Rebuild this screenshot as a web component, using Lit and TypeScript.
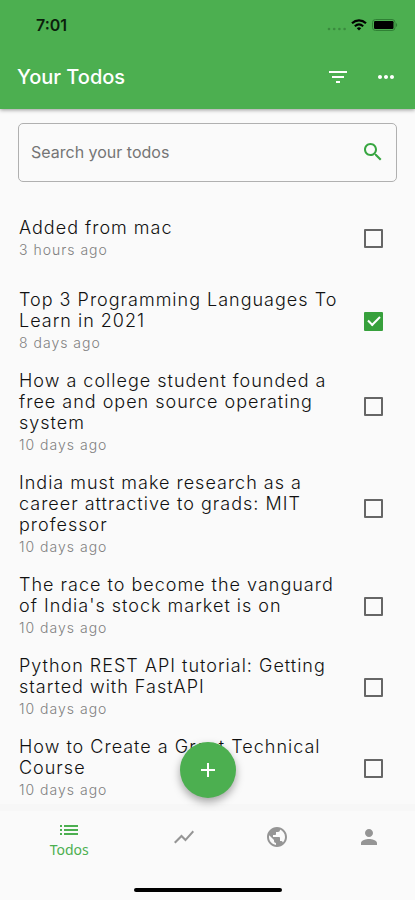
import { LitElement, html, css, svg } from "lit";
import { customElement, property, state } from "lit/decorators.js";

interface Todo {
  title: string;
  age: string;
  done: boolean;
}

const icon = (path: string) => html`
  <svg viewBox="0 0 24 24" aria-hidden="true">${svg`<path d=${path} />`}</svg>
`;

const ICONS = {
  filter: "M10 18h4v-2h-4v2zM3 6v2h18V6H3zm3 7h12v-2H6v2z",
  more: "M6 10c-1.1 0-2 .9-2 2s.9 2 2 2 2-.9 2-2-.9-2-2-2zm12 0c-1.1 0-2 .9-2 2s.9 2 2 2 2-.9 2-2-.9-2-2-2zm-6 0c-1.1 0-2 .9-2 2s.9 2 2 2 2-.9 2-2-.9-2-2-2z",
  search:
    "M15.5 14h-.79l-.28-.27C15.41 12.59 16 11.11 16 9.5 16 5.91 13.09 3 9.5 3S3 5.91 3 9.5 5.91 16 9.5 16c1.61 0 3.09-.59 4.23-1.57l.27.28v.79l5 4.99L20.49 19l-4.99-5zm-6 0C7.01 14 5 11.99 5 9.5S7.01 5 9.5 5 14 7.01 14 9.5 11.99 14 9.5 14z",
  add: "M19 13h-6v6h-2v-6H5v-2h6V5h2v6h6v2z",
  list: "M3 13h2v-2H3v2zm0 4h2v-2H3v2zm0-8h2V7H3v2zm4 4h14v-2H7v2zm0 4h14v-2H7v2zM7 7v2h14V7H7z",
  chart: "M3.5 18.49l6-6.01 4 4L22 6.92l-1.41-1.41-7.09 7.97-4-4L2 16.99z",
  globe:
    "M12 2C6.48 2 2 6.48 2 12s4.48 10 10 10 10-4.48 10-10S17.52 2 12 2zm-1 17.93c-3.95-.49-7-3.85-7-7.93 0-.62.08-1.21.21-1.79L9 15v1c0 1.1.9 2 2 2v1.93zm6.9-2.54c-.26-.81-1-1.39-1.9-1.39h-1v-3c0-.55-.45-1-1-1H8v-2h2c.55 0 1-.45 1-1V7h2c1.1 0 2-.9 2-2v-.41c2.93 1.19 5 4.06 5 7.41 0 2.08-.8 3.97-2.1 5.39z",
  person:
    "M12 12c2.21 0 4-1.79 4-4s-1.79-4-4-4-4 1.79-4 4 1.79 4 4 4zm0 2c-2.67 0-8 1.34-8 4v2h16v-2c0-2.66-5.33-4-8-4z",
};

@customElement("status-bar")
class StatusBar extends LitElement {
  static styles = css`
    :host {
      display: flex;
      align-items: center;
      justify-content: space-between;
      height: 50px;
      padding: 0 16px 0 36px;
      color: #0b1f0c;
    }
    .time {
      font-size: 16px;
      font-weight: 600;
    }
    .signals {
      display: flex;
      align-items: center;
      gap: 4px;
    }
    .dots {
      width: 20px;
      height: 14px;
      fill: #3a8a3e;
    }
    .wifi {
      width: 16px;
      height: 12px;
      fill: none;
      stroke: #000;
    }
    .battery {
      width: 28px;
      height: 14px;
    }
  `;
  render() {
    return html`
      <span class="time">7:01</span>
      <span class="signals">
        <svg class="dots" viewBox="0 0 20 14" aria-hidden="true">
          <circle cx="2" cy="11" r="1.3" /><circle cx="7.2" cy="11" r="1.3" />
          <circle cx="12.4" cy="11" r="1.3" /><circle cx="17.6" cy="11" r="1.3" />
        </svg>
        <svg class="wifi" viewBox="0 0 16 12" aria-hidden="true">
          <path d="M1 4.2C5 .4 11 .4 15 4.2" stroke-width="2.2" />
          <path d="M3.8 7.2C6.3 5 9.7 5 12.2 7.2" stroke-width="2" />
          <path d="M5.8 9.2Q8 7.4 10.2 9.2L8 11.6Z" fill="#000" stroke="none" />
        </svg>
        <svg class="battery" viewBox="0 0 28 14" aria-hidden="true">
          <rect x="1.5" y="1.5" width="22.5" height="11" rx="3" fill="none" stroke="#2f8034" />
          <rect x="3" y="3" width="19.5" height="8" rx="1.2" />
          <path d="M25 5v4c1.6-.6 1.6-3.4 0-4z" fill="#2f8034" />
        </svg>
      </span>
    `;
  }
}

@customElement("todo-row")
class TodoRow extends LitElement {
  @property({ attribute: false }) todo!: Todo;

  static styles = css`
    :host {
      display: block;
      min-height: 72px;
    }
    .row {
      display: flex;
      gap: 16px;
      padding: 9px 32px 8px 19px;
      cursor: pointer;
    }
    .text {
      flex: 1;
      display: flex;
      flex-direction: column;
      gap: 1px;
      line-height: 21px;
      letter-spacing: 1px;
    }
    .title {
      font-size: 18px;
      font-weight: 300;
      color: #111;
    }
    .age {
      font-size: 14px;
      font-weight: 300;
      color: #808080;
    }
    .cell {
      display: flex;
      align-items: center;
      max-height: 72px;
    }
    .box {
      appearance: none;
      box-sizing: border-box;
      display: grid;
      place-items: center;
      width: 19px;
      height: 19px;
      margin: 0;
      border: 2px solid #666;
      border-radius: 1px;
    }
    .box:checked {
      border-color: #37a03c;
      background: #37a03c;
    }
    .box:checked::before {
      content: "";
      width: 10px;
      height: 5px;
      margin-bottom: 4px;
      border: solid #fff;
      border-width: 0 0 2px 2px;
      transform: rotate(-45deg);
    }
  `;
  render() {
    const { title, age, done } = this.todo;
    return html`
      <label class="row">
        <span class="text">
          <span class="title">${title}</span>
          <span class="age">${age}</span>
        </span>
        <span class="cell"><input class="box" type="checkbox" .checked=${done} /></span>
      </label>
    `;
  }
}

@customElement("app-root")
class AppRoot extends LitElement {
  @state() private todos: Todo[] = [
    { title: "Added from mac", age: "3 hours ago", done: false },
    { title: "Top 3 Programming Languages To Learn in 2021", age: "8 days ago", done: true },
    { title: "How a college student founded a free and open source operating system", age: "10 days ago", done: false },
    { title: "India must make research as a career attractive to grads: MIT professor", age: "10 days ago", done: false },
    { title: "The race to become the vanguard of India's stock market is on", age: "10 days ago", done: false },
    { title: "Python REST API tutorial: Getting started with FastAPI", age: "10 days ago", done: false },
    { title: "How to Create a Great Technical Course", age: "10 days ago", done: false },
  ];

  static styles = css`
    :host {
      display: flex;
      flex-direction: column;
      min-height: 100vh;
      background: #fafafa;
      font-family: Inter, "Liberation Sans", sans-serif;
    }
    button {
      border: 0;
      padding: 0;
      background: none;
      color: inherit;
      font: inherit;
      cursor: pointer;
    }
    svg {
      display: block;
      width: 24px;
      height: 24px;
      fill: currentColor;
    }
    .top {
      background: #4caf50;
      box-shadow: 0 1px 4px rgba(0, 0, 0, 0.4);
    }
    .bar {
      display: flex;
      align-items: center;
      gap: 24px;
      height: 54px;
      padding: 0 17px 5px;
      color: #fff;
    }
    .heading {
      flex: 1;
      margin: 0;
      font-size: 20px;
      font-weight: 500;
    }
    .search {
      display: flex;
      align-items: center;
      height: 55px;
      margin: 14px 18px 26px;
      padding: 0 11px 2px 12px;
      border: 1px solid #b0b0b0;
      border-radius: 5px;
      color: #37a641;
    }
    .field {
      flex: 1;
      min-width: 0;
      padding: 0;
      border: 0;
      outline: 0;
      background: none;
      color: #333;
      font: 16px Inter, "Liberation Sans", sans-serif;
    }
    .field::placeholder {
      color: #757575;
      opacity: 1;
    }
    .list {
      flex: 1;
      margin: 0;
      padding: 0;
      list-style: none;
    }
    .bottom {
      position: sticky;
      bottom: 0;
      background: #fafafa;
      box-shadow: 0 -7px 0 #f7f7f7;
    }
    .add {
      position: absolute;
      bottom: calc(100% + 13px);
      left: 50%;
      display: grid;
      place-items: center;
      width: 56px;
      height: 56px;
      margin-left: -28px;
      border-radius: 50%;
      background: #4caf50;
      color: #fff;
      box-shadow: 0 4px 8px rgba(0, 0, 0, 0.35);
    }
    .tabs {
      display: grid;
      grid-template-columns: 3fr 2fr 2fr 2fr;
      height: 52px;
    }
    .tab {
      display: flex;
      flex-direction: column;
      align-items: center;
      justify-content: center;
      color: #959595;
      font: 14px "Noto Sans", sans-serif;
      line-height: 16px;
    }
    .tab.active {
      padding-top: 2px;
      color: #4caf50;
    }
    .home {
      width: 148px;
      height: 4px;
      margin: 25px auto 8px;
      border-radius: 2px;
      background: #000;
    }
  `;

  render() {
    return html`
      <header class="top">
        <status-bar></status-bar>
        <div class="bar">
          <h1 class="heading">Your Todos</h1>
          <button aria-label="Filter">${icon(ICONS.filter)}</button>
          <button aria-label="More">${icon(ICONS.more)}</button>
        </div>
      </header>
      <div class="search">
        <input class="field" type="text" placeholder="Search your todos" aria-label="Search your todos" />
        <button aria-label="Search">${icon(ICONS.search)}</button>
      </div>
      <ul class="list">
        ${this.todos.map((todo) => html`<li><todo-row .todo=${todo}></todo-row></li>`)}
      </ul>
      <footer class="bottom">
        <button class="add" aria-label="Add todo">${icon(ICONS.add)}</button>
        <nav class="tabs">
          <button class="tab active">${icon(ICONS.list)}Todos</button>
          <button class="tab" aria-label="Statistics">${icon(ICONS.chart)}</button>
          <button class="tab" aria-label="Discover">${icon(ICONS.globe)}</button>
          <button class="tab" aria-label="Profile">${icon(ICONS.person)}</button>
        </nav>
        <div class="home"></div>
      </footer>
    `;
  }
}
